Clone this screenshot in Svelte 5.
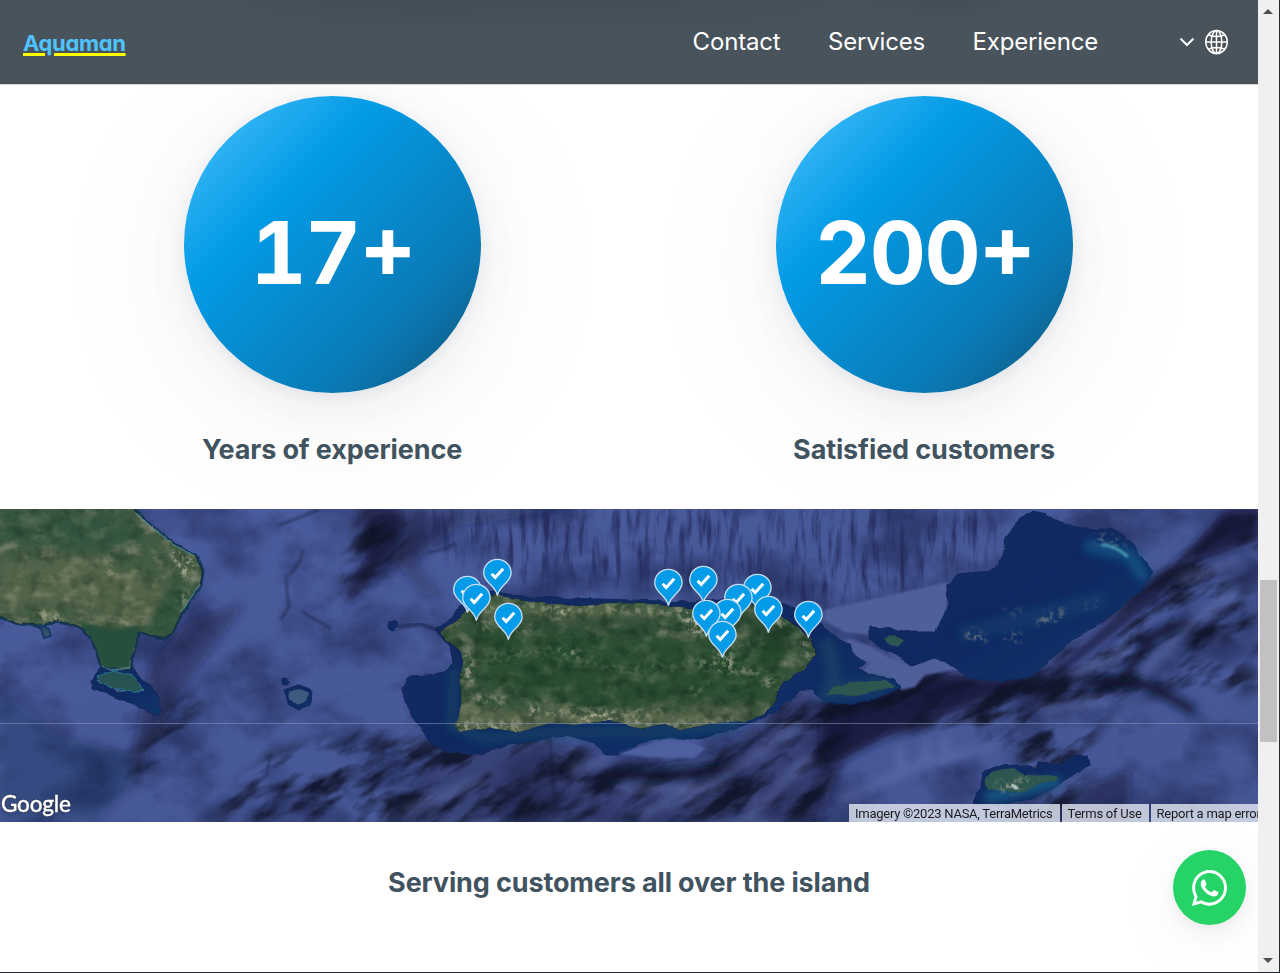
<script>
  const stats = [
    { value: '17+', label: 'Years of experience' },
    { value: '200+', label: 'Satisfied customers' }
  ];
  const links = ['Contact', 'Services', 'Experience'];
  const pins = [
    [497, 596], [467, 613], [476, 621], [508, 640],
    [668, 606], [703, 603], [757, 611], [738, 621],
    [727, 636], [706, 637], [768, 633], [808, 638], [722, 658]
  ];
  const coast = {
    hispaniola: 'M-9 500H123L133 509 155 530 175 546 195 557 202 570 200 585 189 600 177 622 172 633 164 637 150 634 138 630 135 645 130 660 129 669 102 667 98 652 91 637 82 627 70 623 55 621 40 625 20 623 -9 614Z',
    pr: 'M441 632L445 640 455 648 461 652 463 662 460 680 461 700 458 718 454 725 460 731 490 728 520 732 550 723 575 725 610 720 640 728 665 724 680 730 710 724 745 721 765 714 776 700 783 682 805 668 815 655 812 640 803 632 790 621 765 606 740 602 715 608 690 609 660 604 620 603 580 606 560 605 535 602 510 599 496 595 478 599 466 608 461 618 446 627Z',
    prShelf: 'M435 630L450 647 453 663 444 672 430 675 410 676 402 690 407 708 420 725 428 740 445 752 480 754 510 745 540 738 570 736 595 743 606 755 620 755 640 743 667 738 690 740 720 733 750 723 775 712 790 700 800 690 812 690 825 702 850 704 880 698 901 687 895 680 870 674 858 670 865 662 855 655 850 645 840 640 822 625 800 610 765 597 740 597 690 602 600 599 520 597 490 592 462 602 453 618Z',
    virgin: 'M869 627L885 628 910 632 935 632 942 620 948 605 947 585 957 574 990 571 1003 558 1006 538 1020 518 1033 511 1045 514 1060 523 1085 529 1110 529 1130 540 1140 555 1153 572 1140 590 1110 617 1080 635 1050 660 1030 677 1000 682 970 678 950 665 935 658 912 666 895 655 880 648 869 638Z',
    croix: 'M972 804L980 788 982 772 995 766 1018 765 1037 769 1038 762 1060 765 1070 757 1088 756 1090 764 1065 780 1035 798 1000 805Z'
  };
</script>

<div class="window">
  <div class="page">
    <header>
      <a class="logo" href="#top">Aquaman</a>
      <nav>
        {#each links as link}<a href="#{link}">{link}</a>{/each}
      </nav>
      <div class="lang">
        <svg width="16" height="10" viewBox="0 0 16 10" fill="none" stroke="#fff" stroke-width="2"><path d="M1.500 1.500L8 8l6.500-6.500" /></svg>
        <svg width="24" height="26" viewBox="0 0 24 26" fill="none" stroke="#fff" stroke-width="1.500">
          <ellipse cx="11.500" cy="13" rx="10.800" ry="11.500" />
          <ellipse cx="11.500" cy="13" rx="5.300" ry="11.500" />
          <path d="M11.500 1.500v23M.7 13h21.600M3 5.800q8.500 3.600 17 0M3 20.200q8.500-3.600 17 0" />
        </svg>
      </div>
    </header>

    <section class="stats">
      {#each stats as s}
        <div class="stat">
          <div class="circle"><span>{s.value}</span></div>
          <h2>{s.label}</h2>
        </div>
      {/each}
    </section>

    <section class="map">
      <svg class="terrain" viewBox="0 509 1258 313" width="1258" height="313">
        <defs>
          <filter id="swell" x="0" y="0" width="100%" height="100%" color-interpolation-filters="sRGB">
            <feTurbulence type="fractalNoise" baseFrequency=".014 .018" numOctaves="5" seed="8" />
            <feColorMatrix values="0 0 0 0 .1  0 0 0 0 .13  0 0 0 0 .29  2.800 0 0 0 -1.150" />
          </filter>
          <filter id="ridge" x="-10%" y="-10%" width="120%" height="120%" color-interpolation-filters="sRGB">
            <feTurbulence type="fractalNoise" baseFrequency=".018 .05" numOctaves="5" seed="21" result="n" />
            <feColorMatrix in="n" values="0 0 0 0 .06  0 0 0 0 .075  0 0 0 0 .15  4 0 0 0 -1.750" result="c" />
            <feGaussianBlur in="SourceAlpha" stdDeviation="9" result="b" />
            <feComposite in="c" in2="b" operator="in" />
          </filter>
          <filter id="streak" x="-10%" y="-10%" width="120%" height="120%" color-interpolation-filters="sRGB">
            <feTurbulence type="fractalNoise" baseFrequency=".14 .022" numOctaves="4" seed="4" result="n" />
            <feColorMatrix in="n" values="0 0 0 0 .12  0 0 0 0 .14  0 0 0 0 .32  3 0 0 0 -1.400" result="c" />
            <feGaussianBlur in="SourceAlpha" stdDeviation="9" result="b" />
            <feComposite in="c" in2="b" operator="in" />
          </filter>
          <filter id="rough" color-interpolation-filters="sRGB">
            <feTurbulence type="fractalNoise" baseFrequency=".08" numOctaves="2" seed="3" result="n" />
            <feDisplacementMap in="SourceGraphic" in2="n" scale="5" xChannelSelector="R" yChannelSelector="G" result="d" />
            <feGaussianBlur in="d" stdDeviation=".7" />
          </filter>
          <filter id="forest" color-interpolation-filters="sRGB">
            <feTurbulence type="fractalNoise" baseFrequency=".08" numOctaves="2" seed="3" result="n" />
            <feDisplacementMap in="SourceGraphic" in2="n" scale="5" xChannelSelector="R" yChannelSelector="G" result="d" />
            <feTurbulence type="fractalNoise" baseFrequency=".05 .07" numOctaves="5" seed="12" result="t" />
            <feColorMatrix in="t" values=".7 0 0 0 -.34  .5 0 0 0 -.25  .5 0 0 0 -.25  0 0 0 0 1" result="light" />
            <feComposite in="d" in2="light" operator="arithmetic" k2="1" k3="1" k4="0" result="sum" />
            <feComposite in="sum" in2="d" operator="in" result="o" />
            <feGaussianBlur in="o" stdDeviation=".45" />
          </filter>
          <filter id="mottle" x="0" y="0" width="100%" height="100%" color-interpolation-filters="sRGB">
            <feTurbulence type="fractalNoise" baseFrequency=".07 .08" numOctaves="5" seed="17" />
            <feColorMatrix values="0 0 0 0 .06  0 0 0 0 .16  0 0 0 0 .1  3 0 0 0 -1.400" />
          </filter>
          <filter id="towns" x="-5%" y="-10%" width="110%" height="120%" color-interpolation-filters="sRGB">
            <feTurbulence type="fractalNoise" baseFrequency=".17" numOctaves="4" seed="31" result="n" />
            <feColorMatrix in="n" values="0 0 0 0 .65  0 0 0 0 .65  0 0 0 0 .56  5 0 0 0 -2.300" result="c" />
            <feGaussianBlur in="SourceAlpha" stdDeviation="3.500" result="b" />
            <feComposite in="c" in2="b" operator="in" result="o" />
            <feGaussianBlur in="o" stdDeviation=".5" />
          </filter>
          <filter id="soft" x="-30%" y="-30%" width="160%" height="160%"><feGaussianBlur stdDeviation="5" /></filter>
          <filter id="edge"><feGaussianBlur stdDeviation=".8" /></filter>
          <linearGradient id="sea" x2="1" y2="1">
            <stop stop-color="#4b5c9e" /><stop offset=".45" stop-color="#475898" /><stop offset="1" stop-color="#465695" />
          </linearGradient>
          <linearGradient id="shelf" x2="1" y2="1">
            <stop stop-color="#122d60" /><stop offset=".5" stop-color="#102861" /><stop offset="1" stop-color="#0f366b" />
          </linearGradient>
          <clipPath id="onIsland"><path d={coast.pr} /></clipPath>
          <clipPath id="onWest"><path d={coast.hispaniola} /></clipPath>
        </defs>

        <rect y="509" width="1258" height="313" fill="url(#sea)" />
        <rect y="509" width="1258" height="313" filter="url(#swell)" opacity=".55" />
        <g fill="#141b3a" filter="url(#soft)">
          <path d="M150 665L190 620 245 603 230 625 190 680 170 710 140 770 130 765Z" opacity=".4" />
          <path d="M363 509H405L400 545 378 570 350 605 345 592 365 558Z" opacity=".85" />
          <path d="M0 690L60 735 150 760 100 820H0Z" opacity=".25" />
          <path d="M410 509H590L460 525 415 560 445 600 420 592 390 555Z" opacity=".3" />
          <path d="M425 765L490 740 560 740 620 770 710 757 800 690 860 710 820 822H390Z" opacity=".35" />
          <path d="M820 710L910 672 1040 680 1090 640 1145 590 1190 550 1225 509H1258V540L1190 565 1130 620 1060 675 990 700 890 735 820 770Z" opacity=".9" />
          <path d="M1050 822L1090 785 1130 770V822Z" opacity=".5" />
        </g>
        <g filter="url(#streak)" opacity=".75">
          <path d="M420 509H1000L985 565 930 575 890 600 820 605 740 585 500 580 430 540Z" />
        </g>
        <g filter="url(#ridge)" opacity=".9" transform="rotate(-32 630 660)">
          <g transform="rotate(32 630 660)">
            <path d="M360 509H410V550L340 620 345 570Z" />
            <path d="M280 790L330 730 420 740 560 735 610 765 700 760 800 690 860 700 820 822H200Z" />
            <path d="M110 790L180 700 210 690 175 760ZM210 822L270 755 310 745 255 822Z" />
            <path d="M810 750V705L910 670 1030 675 1140 590 1258 500V570L1200 600 1150 650 1258 670V690L1130 690 1100 710 1070 822H1050L1010 740 900 725Z" />
            <path d="M1130 660L1200 610 1258 590V650Z" />
          </g>
        </g>
        <g stroke="#11172f" fill="none" stroke-linecap="round" filter="url(#edge)" opacity=".4">
          <path d="M303 551Q300 566 286 578Q287 596 289 606L281 619M303 612L330 628M280 525L318 510M222 808L267 775 270 755M550 740L554 795M430 552Q447 550 455 543" stroke-width="2.500" />
        </g>
        <g stroke="#11172f" fill="none" stroke-linecap="round" filter="url(#soft)">
          <path d="M1190 622Q1160 628 1150 640L1122 680M1090 684Q1130 678 1155 688L1192 710M610 775H675L735 768" stroke-width="9" />
        </g>
        <g stroke="#6876b4" stroke-width="7" fill="none" opacity=".6" filter="url(#soft)">
          <path d="M640 815L720 780 800 725M745 822L810 755M405 812L480 780M1140 675L1190 625 1240 590M840 800L920 765 1000 745M620 788H700M1040 712L1110 700M1070 675L1130 650M1180 580L1240 560M570 770L610 760M900 745V770M925 740V765M945 735V760" />
        </g>

        <g fill="#4f5e99" filter="url(#edge)">
          <path d="M825 610L947 582V606L940 632H910L869 627V635L845 632 825 621Z" />
          <path d="M838 643L850 639 871 646 890 658 912 665 935 655 960 669 925 675 915 687 902 690 892 682 862 672 870 663 856 657Z" />
        </g>

        <g fill="url(#shelf)" stroke="#10285a" filter="url(#rough)">
          <path d={coast.prShelf} />
          <path d={coast.virgin} />
          <path d={coast.croix} />
          <path d="M102 664L91 680 92 688 130 703 155 715 161 711 158 696 148 683 131 669Z" />
          <path d="M284 690L298 685 312 690 311 704 300 710 288 703Z" />
          <circle cx="286" cy="681" r="3" /><ellipse cx="393" cy="626" rx="5" ry="5" />
        </g>
        <path d="M398 627L420 624 438 630" fill="none" stroke="#182247" stroke-width="4" opacity=".6" filter="url(#edge)" />
        <path d="M618 754L642 746 670 738 688 742 706 748 694 758 650 757Z" fill="#5060a0" filter="url(#edge)" />
        <g filter="url(#soft)" fill="none">
          <path d="M454 670L452 725 480 738 560 732 650 732 740 725" stroke="#144f66" stroke-width="10" opacity=".55" />
          <path d="M825 640Q840 675 830 692L885 684" stroke="#1c5067" stroke-width="13" opacity=".55" />
          <path d="M1085 545L1130 555 1145 580" stroke="#17699a" stroke-width="12" opacity=".6" />
          <path d="M985 798L1060 781" stroke="#1d7c9a" stroke-width="9" opacity=".7" />
          <path d="M960 635L1060 610 1105 598" stroke="#164a78" stroke-width="15" opacity=".4" />
        </g>

        <path d={coast.hispaniola} fill="#365344" stroke="#143554" stroke-width="5" filter="url(#rough)" />
        <path d={coast.hispaniola} fill="#435c44" filter="url(#forest)" />
        <g clip-path="url(#onWest)">
          <g filter="url(#soft)">
            <path d="M0 560L90 555 175 590 145 625 80 610 0 608Z" fill="#667054" opacity=".4" />
            <path d="M0 509H110L150 540 90 555 0 540Z" fill="#28503a" opacity=".55" />
            <path d="M165 590L195 580 175 640 140 635Z" fill="#284f38" opacity=".7" />
          </g>
          <rect y="509" width="210" height="130" filter="url(#mottle)" opacity=".3" />
          <path d="M80 622L110 630 140 626 138 640 131 668H102L96 650 88 635Z" fill="#27503d" filter="url(#edge)" />
          <g filter="url(#towns)">
            <path d="M108 564H114V576H108ZM168 547L198 562 190 580 178 573ZM178 600L188 590 190 595 180 608ZM40 610L66 618 65 622 38 620ZM36 532H41V537H36Z" />
          </g>
        </g>
        <path d="M135 513L155 530 175 546 195 557M200 585L181 612M101 667L114 671 130 667M97 680L120 692 145 690" fill="none" stroke="#5d969e" stroke-width="1.300" opacity=".7" filter="url(#rough)" />
        <path d="M97 676L115 671 132 676 144 689 134 692 116 689 102 684Z" fill="#275452" stroke="#24708a" filter="url(#rough)" />
        <path d="M40 625L49 629 51 636 44 638Z" fill="#345166" stroke="#173a68" stroke-width="2" />
        <path d="M289 692L299 689 309 693 306 702 298 705 290 699Z" fill="#405a7f" filter="url(#rough)" />

        <path d={coast.pr} fill="#36533b" filter="url(#forest)" />
        <g clip-path="url(#onIsland)">
          <g filter="url(#soft)">
            <path d="M475 625L560 632 710 640 790 650 765 700 600 707 500 692 475 665Z" fill="#23472b" opacity=".55" />
            <path d="M475 602L620 603 690 614 650 622 520 620Z" fill="#616f53" opacity=".6" />
            <path d="M458 706L560 714 660 712 745 710 770 716 700 730 455 735Z" fill="#73765c" opacity=".55" />
            <path d="M755 625L795 625 790 655 750 650Z" fill="#173d24" opacity=".7" />
            <path d="M475 618L560 622 660 619" fill="none" stroke="#193a2b" stroke-width="5" opacity=".8" />
          </g>
          <rect x="440" y="590" width="380" height="145" filter="url(#mottle)" opacity=".45" />
          <g filter="url(#towns)">
            <path d="M552 603H568V618H552ZM680 614L705 612 720 620 700 636 685 630ZM580 710H615V722H580ZM528 705H538V716H528ZM717 655H733V670H717ZM630 721H650V732H630ZM464 650H472V686H464ZM765 678H780V686H765ZM765 620H790V626H765ZM455 722H520V732H455Z" />
            <path d="M470 697L510 702M535 712L600 716 660 712M690 692L700 688M700 665L760 672M480 606L600 608 690 612M480 625L530 628M560 650L580 654M800 640L812 660M660 725L740 723" fill="none" stroke="#fff" stroke-width="5" />
            <path d="M480 660L550 650 620 670 680 665 765 640" fill="none" stroke="#fff" stroke-width="9" opacity=".25" />
          </g>
        </g>

        <g fill="#2d5650" filter="url(#rough)">
          <path d="M827 694L833 687 860 681 885 681 896 686 878 691 855 696Z" />
          <path d="M884 638L893 635 904 640 898 647 890 645Z" />
          <path d="M987 790L985 778 994 771 1015 769 1026 776 1054 775 1057 779 1036 786 1018 793Z" />
        </g>
        <g filter="url(#towns)" opacity=".8">
          <path d="M962 630L980 633 991 642 970 639ZM1005 635H1022V640H1005ZM1033 622L1066 607 1060 618 1042 624ZM1089 604L1108 597 1092 606 1087 614ZM990 785L1040 776 1010 793ZM1000 611H1025V613H1000Z" />
          <path d="M1094 540L1110 538 1125 551" stroke="#fff" stroke-width="5" fill="none" />
        </g>
        <path d="M1101 545Q1115 545 1128 557" fill="none" stroke="#5cb5c3" stroke-width="2.500" opacity=".8" filter="url(#edge)" />
        <path d="M1012 785L1018 789" stroke="#dce3dd" stroke-width="3" filter="url(#edge)" />
        <path d="M0 723.500H1258" stroke="#8796b4" opacity=".55" />

        {#each pins as [x, y]}
          <g transform="translate({x + 0.4} {y - 0.2})">
            <path d="M0 0C-1-10-13.700-13-13.700-22.800a13.700 13.700 0 0 1 27.400 0C13.700-13 1-10 0 0Z" fill="#049be8" stroke="#c7dff0" stroke-width="1.300" />
            <path d="M-5.800-22L-2.200-18.300 5.800-27" fill="none" stroke="#fff" stroke-width="3" />
          </g>
        {/each}
      </svg>
      <span class="google">Google</span>
      <div class="credits">
        <span>Imagery ©2023 NASA, TerraMetrics</span><span>Terms of Use</span><span>Report a map error</span>
      </div>
    </section>

    <h2 class="serving">Serving customers all over the island</h2>

    <a class="whatsapp" href="#chat" aria-label="WhatsApp">
      <svg width="35" height="36" viewBox="0 32 448 448" preserveAspectRatio="none" fill="#fff">
        <path d="M380.900 97.100C339 55.100 283.200 32 223.900 32c-122.400 0-222 99.600-222 222 0 39.100 10.200 77.300 29.600 111L0 480l117.700-30.900c32.400 17.700 68.900 27 106.100 27h.1c122.300 0 224.100-99.600 224.100-222 0-59.300-25.200-115-67.100-157zm-157 341.600c-33.200 0-65.700-8.900-94-25.700l-6.700-4-69.800 18.300L72 359.200l-4.400-7c-18.500-29.400-28.200-63.300-28.200-98.200 0-101.700 82.800-184.500 184.600-184.500 49.300 0 95.600 19.200 130.400 54.100 34.800 34.900 56.200 81.200 56.100 130.500 0 101.800-84.900 184.600-186.600 184.600zm101.200-138.200c-5.500-2.800-32.800-16.200-37.900-18-5.100-1.900-8.800-2.800-12.500 2.800-3.700 5.600-14.300 18-17.600 21.800-3.200 3.700-6.500 4.200-12 1.400-32.600-16.300-54-29.100-75.500-66-5.700-9.800 5.700-9.100 16.300-30.300 1.800-3.700.9-6.900-.5-9.700-1.400-2.800-12.500-30.100-17.100-41.200-4.500-10.800-9.100-9.300-12.500-9.500-3.200-.2-6.900-.2-10.600-.2-3.700 0-9.700 1.400-14.800 6.900-5.100 5.600-19.400 19-19.400 46.300 0 27.300 19.900 53.700 22.600 57.400 2.800 3.700 39.100 59.700 94.800 83.800 35.200 15.200 49 16.500 66.600 13.900 10.700-1.600 32.800-13.400 37.400-26.400 4.600-13 4.600-24.100 3.200-26.400-1.300-2.500-5-3.900-10.500-6.600z" />
      </svg>
    </a>
  </div>
  <div class="scrollbar"><i class="up"></i><i class="thumb"></i><i class="down"></i></div>
</div>

<style>
  :global(body) { overflow: hidden; background: #fff; }
  .window { box-sizing: border-box; width: 1280px; height: 973px; display: flex; border-right: 1px solid #25282e; border-bottom: 1px solid #25282e; font-family: Inter, sans-serif; color: #41535f; }
  .page { position: relative; width: 1258px; height: 972px; overflow: hidden; background: #fff; }
  header { position: relative; z-index: 2; box-sizing: border-box; height: 85px; padding: 0 29px 1px 23px; display: flex; align-items: center; background: radial-gradient(ellipse 90px 25px at 945px -4px, #424c55, transparent), radial-gradient(ellipse 230px 45px at 400px -8px, #424c55, transparent), radial-gradient(ellipse 300px 60px at 650px -15px, #434d56, transparent), #49535b; border-bottom: 1px solid #d4d6d8; }
  .logo { color: #4fc3ff; font-size: 22px; line-height: 28px; font-weight: 700; letter-spacing: -.35px; font-feature-settings: 'cv11'; text-decoration: underline; text-decoration-color: #ff0; text-decoration-thickness: 3px; text-underline-offset: 2px; padding-top: 3px; }
  nav { margin-left: auto; display: flex; gap: 47.500px; font-size: 24px; line-height: 30px; letter-spacing: -.18px; }
  nav a { color: #fff; text-decoration: none; }
  .lang { display: flex; align-items: center; gap: 10px; margin-left: 81px; }
  .stats { display: grid; grid-template-columns: 592px 592px; padding: 11px 36px 0; height: 424px; box-sizing: border-box; }
  .stat { display: flex; flex-direction: column; align-items: center; }
  .circle { width: 297px; height: 297px; border-radius: 50%; display: flex; align-items: center; justify-content: center; color: #fff; font-size: 87px; font-weight: 700; line-height: 1; letter-spacing: -1.500px; font-feature-settings: 'tnum', 'case'; background: linear-gradient(135deg, #4fc3ff 0%, #039be5 33%, #0a7cba 71%, #0b73aa 79%, #0f557c 96%); box-shadow: 0 4px 14px rgba(60, 70, 110, .07), 0 10px 44px rgba(30, 50, 60, .06), 0 22px 160px 20px rgba(0, 0, 0, .045); }
  .circle span { padding-top: 15px; padding-left: 1px; }
  h2 { margin: 0; font-size: 27px; font-weight: 700; line-height: 36px; letter-spacing: -.13px; }
  .stat h2 { margin-top: 39px; position: relative; }
  .map { position: relative; height: 313px; overflow: hidden; }
  .terrain { display: block; }
  .google { position: absolute; left: 1px; bottom: 4px; color: #fff; font: 500 22.500px/28px Lato, sans-serif; letter-spacing: -.2px; -webkit-text-stroke: .3px #fff; text-shadow: 0 0 2px #333, 0 0 1px #333; }
  .credits { position: absolute; left: 849px; bottom: 0; display: flex; gap: 2px; white-space: nowrap; font: 13px/18px Roboto, sans-serif; letter-spacing: -.25px; color: #1b1b1f; }
  .credits span { padding: 0 7px 0 6px; height: 18px; line-height: 19px; background: rgba(228, 232, 242, .8); }
  .serving { margin-top: 43px; text-align: center; }
  .whatsapp { position: absolute; left: 1173px; top: 850px; width: 73px; height: 75px; border-radius: 50%; background: #25d366; display: flex; align-items: center; justify-content: center; box-shadow: 0 4px 12px rgba(60, 70, 110, .06), 0 8px 30px rgba(30, 50, 60, .05), 0 14px 80px rgba(0, 0, 0, .05); }
  .scrollbar { width: 21px; display: flex; flex-direction: column; align-items: center; background: #f0f0f0; box-sizing: border-box; padding: 9px 1px 9px 0; }
  .scrollbar i { display: block; }
  .up, .down { border: 5px solid transparent; }
  .up { border-top: 0; border-bottom: 5px solid #505050; }
  .down { border-bottom: 0; border-top: 5px solid #505050; margin-top: auto; }
  .thumb { width: 17px; height: 162px; margin-top: 566px; background: #c1c1c1; }
</style>
